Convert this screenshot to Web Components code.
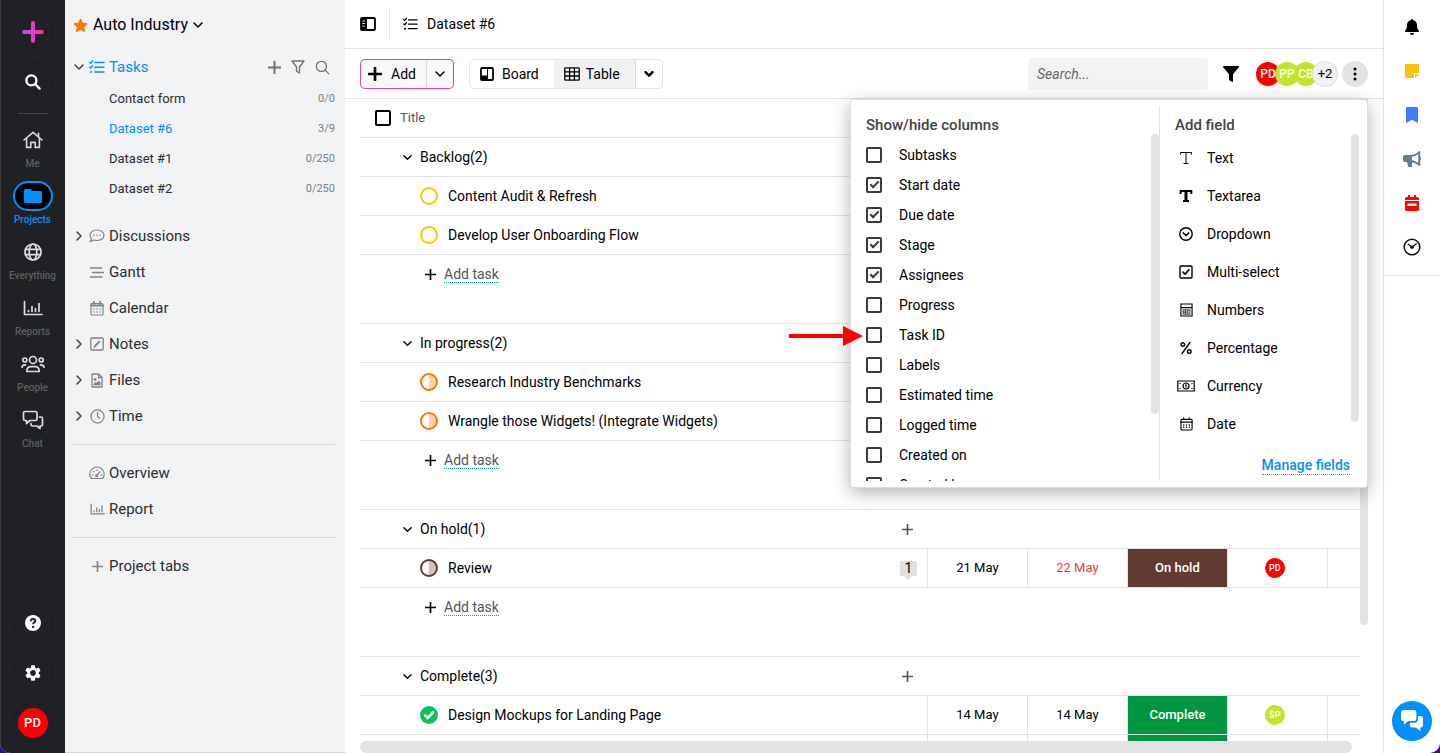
<!DOCTYPE html>
<html lang="en">
<head>
<meta charset="utf-8">
<meta name="viewport" content="width=device-width, initial-scale=1">
<title>Dataset #6 - Auto Industry</title>
<style>
  html, body { height: 100%; }
  body {
    margin: 0;
    background: #3a0a8c;
    color: #000;
    font-family: Roboto, "Liberation Sans", sans-serif;
    font-size: 14px;
    line-height: 20px;
    overflow: hidden;
  }
</style>
</head>
<body>
<project-app></project-app>

<script>
// Icon drawings: [viewBox, markup]
const line = 'fill="none" stroke="currentColor" stroke-linecap="round" stroke-linejoin="round"';
const ICONS = {
  plusGradient: ['0 0 22 22', `<defs><linearGradient id="g" x1="0" x2="1" y1="0" y2="0"><stop offset="0" stop-color="#b44df5"/><stop offset=".5" stop-color="#e83ad0"/><stop offset="1" stop-color="#ff2d9d"/></linearGradient></defs><path d="M9 1.700q0-1.400 2-1.400t2 1.400V9h7.300q1.400 0 1.400 2t-1.400 2H13v7.300q0 1.400-2 1.400t-2-1.400V13H1.700Q.3 13 .3 11t1.400-2H9z" fill="url(#g)"/>`],
  searchBold: ['0 0 16 16', `<g ${line} stroke-width="2.400"><circle cx="6.400" cy="6.400" r="5"/><path d="M10.200 10.200l4.400 4.400"/></g>`],
  search: ['0 0 16 16', `<g ${line} stroke-width="1.300"><circle cx="6.800" cy="6.800" r="5.400"/><path d="M10.800 10.800l4 4"/></g>`],
  home: ['0 0 20 18', `<g ${line} stroke-width="1.600"><path d="M1 9l9-7.600L19 9"/><path d="M3.600 7.400v9h4.200v-5h4.400v5h4.200v-9"/><path d="M15.500 2.200v3.300"/></g>`],
  folder: ['0 0 18 14', `<path fill="currentColor" d="M1.500 0h5l2 2h8A1.500 1.500 0 0 1 18 3.500v9a1.500 1.500 0 0 1-1.500 1.500h-15A1.500 1.500 0 0 1 0 12.500v-11A1.500 1.500 0 0 1 1.500 0z"/>`],
  globe: ['0 0 18 18', `<g ${line} stroke-width="1.700"><circle cx="9" cy="9" r="8"/><ellipse cx="9" cy="9" rx="3.800" ry="8"/><path d="M1.600 6.300h14.800M1.600 11.700h14.800"/></g>`],
  chart: ['0 0 20 16', `<g ${line} stroke-width="1.700"><path d="M1.500 1.500v13h17.500"/><path d="M5.500 11.500v-1M9 11.500v-5M12.500 11.500v-3M16 11.500v-8"/></g>`],
  people: ['0 0 24 18', `<g ${line} stroke-width="1.700"><circle cx="12" cy="5" r="3.500"/><circle cx="3.800" cy="5" r="2"/><circle cx="20.200" cy="5" r="2"/><path d="M5.800 16.500c0-3.600 2-4.800 4-4.800h4.400c2 0 4 1.200 4 4.800z"/><path d="M1 12.300c0-2 1.200-2.500 3.600-2.500M23 12.300c0-2-1.200-2.500-3.600-2.500"/></g>`],
  chat: ['0 0 22 20', `<g ${line} stroke-width="1.700"><path d="M3 1.500h10.500a1.500 1.500 0 0 1 1.500 1.500v6a1.500 1.500 0 0 1-1.500 1.500H8l-3.500 3v-3H3A1.500 1.500 0 0 1 1.500 9V3A1.500 1.500 0 0 1 3 1.500z"/><path d="M17.500 7H19a1.500 1.500 0 0 1 1.500 1.500v6A1.500 1.500 0 0 1 19 16h-1v2.500L15 16h-4.500A1.500 1.500 0 0 1 9 14.500v-1"/></g>`],
  help: ['0 0 16 16', `<circle cx="8" cy="8" r="8" fill="currentColor"/><path d="M5.800 6.200c.1-1.500 1-2.200 2.300-2.200s2.200.8 2.200 1.900c0 1.600-2.200 1.600-2.200 3.300" fill="none" stroke="#202124" stroke-width="1.900"/><circle cx="8.100" cy="11.900" r="1.200" fill="#202124"/>`],
  gear: ['2.400 2 19.200 20', `<path fill="currentColor" d="M19.140 12.940c.04-.3.06-.61.06-.94 0-.32-.02-.64-.07-.94l2.030-1.580c.18-.14.23-.41.12-.61l-1.920-3.320c-.12-.22-.37-.29-.59-.22l-2.390.96c-.5-.38-1.030-.7-1.620-.94l-.36-2.540c-.04-.24-.24-.41-.48-.41h-3.840c-.24 0-.43.17-.47.41l-.36 2.540c-.59.24-1.130.57-1.620.94l-2.390-.96c-.22-.08-.47 0-.59.22L2.740 8.870c-.12.21-.08.47.12.61l2.030 1.580c-.05.3-.09.63-.09.94s.02.64.07.94l-2.030 1.580c-.18.14-.23.41-.12.61l1.920 3.320c.12.22.37.29.59.22l2.390-.96c.5.38 1.030.7 1.620.94l.36 2.540c.05.24.24.41.48.41h3.840c.24 0 .44-.17.47-.41l.36-2.540c.59-.24 1.130-.56 1.620-.94l2.390.96c.22.08.47 0 .59-.22l1.920-3.320c.12-.22.07-.47-.12-.61l-2.010-1.580zM12 15.600c-1.980 0-3.600-1.620-3.600-3.600s1.620-3.600 3.600-3.600 3.600 1.620 3.600 3.600-1.620 3.600-3.600 3.600z"/>`],
  star: ['0 0 14 14', `<path fill="currentColor" stroke="currentColor" stroke-linejoin="round" d="M7 1l1.800 3.900 4.200.5-3.100 2.900.8 4.200L7 10.400l-3.700 2.100.8-4.200L1 5.400l4.200-.5z"/>`],
  down: ['0 0 10 10', `<path ${line} stroke-width="1.500" d="M1 3l4 4 4-4"/>`],
  downBold: ['0 0 10 10', `<path ${line} stroke-width="2.400" d="M1.500 3.200L5 6.700l3.500-3.500"/>`],
  right: ['0 0 10 10', `<path ${line} stroke-width="1.500" d="M3 1l4 4-4 4"/>`],
  tasks: ['0 0 16 14', `<g ${line} stroke-width="1.400"><path d="M5.800 2.500H15M5.800 7.200H15M5.800 12H15"/><path d="M.8 2.200l1 1L3.600 1M.8 6.900l1 1 1.800-2.200"/><path d="M2 12h.2" stroke-width="2"/></g>`],
  plus: ['0 0 12 12', `<path d="M6 0v12M0 6h12" fill="none" stroke="currentColor" stroke-width="1.800"/>`],
  plusBold: ['0 0 14 14', `<path d="M7 1v12M1 7h12" ${line} stroke-width="2.700"/>`],
  funnel: ['0 0 14 14', `<path ${line} stroke-width="1.300" d="M1 1h12L8.500 7v6l-3-1.700V7z"/>`],
  funnelSolid: ['0 0 16 16', `<path fill="currentColor" d="M.6 0h14.800q.9.500.4 1.300L10 8.200v7q-.3.900-1 .7l-2.500-1.700Q6 14 6 13.400V8.200L.2 1.300Q-.3.500.6 0z"/>`],
  bubble: ['0 0 16 14', `<g ${line} stroke-width="1.200"><path d="M8 1c3.900 0 7 2.300 7 5.200s-3.100 5.300-7 5.300c-1 0-2-.2-2.900-.5L1 12.800l1.600-3C1.600 8.800 1 7.600 1 6.200 1 3.300 4.100 1 8 1z"/><path stroke-width="1.500" d="M4.900 6.300h.1M8 6.300h.1M11.100 6.300h.1"/></g>`],
  gantt: ['0 0 14 13', `<path fill="none" stroke="currentColor" stroke-width="1.500" d="M0 2h12M2 6.500h12M0 11h12.500"/>`],
  calendar: ['0 0 14 15', `<g ${line} stroke-width="1.200"><rect x="1" y="2.500" width="12" height="11.500" rx="1"/><path d="M1 4.500h12M4 .8v2M10 .8v2" stroke-width="1.800"/><path stroke-width="1.500" d="M4 8h.1M7 8h.1M10 8h.1M4 11h.1M7 11h.1M10 11h.1"/></g>`],
  date: ['0 0 14 15', `<g ${line} stroke-width="1.200"><rect x="1" y="2.500" width="12" height="11.500" rx="1"/><path d="M1 5.500h12M4 .8v1.700M10 .8v1.700"/><path stroke-width="1.500" d="M4 8.500h.1M7 8.500h.1M10 8.500h.1M4 11h.1M7 11h.1M10 11h.1"/></g>`],
  note: ['0 0 14 14', `<g ${line} stroke-width="1.300"><rect x=".8" y="1" width="12.400" height="12" rx="1"/><path stroke-width="1.900" d="M5 9l4.300-4.400"/><path stroke-width="1" d="M3.800 10.300l1-.3"/></g>`],
  file: ['0 0 12 15', `<g ${line} stroke-width="1.300"><path d="M1 1h6.500L11 4.500V14H1zM7.500 1v3.500H11"/><circle cx="4" cy="6.500" r=".8" fill="currentColor"/><path fill="currentColor" d="M3 11.500l1.500-1.800 1.200 1 2-2.200 1.300 1.500v1.500z"/></g>`],
  clock: ['0 0 16 16', `<g ${line} stroke-width="1.300"><circle cx="8" cy="8" r="7"/><path d="M8 3.800V8l2.200 1.900"/></g>`],
  gauge: ['0 0 16 14', `<g ${line} stroke-width="1.200"><path d="M2.500 12.500C1.500 11.400.8 10 .8 8.200a7.200 7.200 0 0 1 14.400 0c0 1.800-.7 3.200-1.700 4.300z"/><path d="M8 9.200l3-3.400"/><circle cx="7.700" cy="9.700" r="1"/><path stroke-width="1.500" d="M3.500 9h.1M4.700 5.800h.1M8 4.200h.1M12.500 9h.1"/></g>`],
  panel: ['0 0 16 14', `<rect x="1" y="1" width="14" height="12" rx="1" fill="none" stroke="currentColor" stroke-width="1.800"/><path fill="currentColor" d="M1 1h6v12H1z"/><path d="M2.500 4h2.200M2.500 6.500h2.200M2.500 9h2.200" stroke="#fff"/>`],
  board: ['0 0 14 14', `<rect x="1" y="1" width="12" height="12" rx="1" fill="none" stroke="currentColor" stroke-width="1.800"/><path fill="currentColor" d="M1 8.500h6V1h1v12H1z"/>`],
  grid: ['0 0 16 14', `<path ${line} stroke-width="1.300" d="M1.500.8h13q.7 0 .7.700v11q0 .7-.7.7h-13q-.7 0-.7-.7v-11q0-.7.7-.7zM.8 4.800h14.400M.8 9h14.400M5.600.8v12.400M10.400.8v12.400"/>`],
  dots: ['0 0 4 14', `<g fill="currentColor"><circle cx="2" cy="2" r="1.500"/><circle cx="2" cy="7" r="1.500"/><circle cx="2" cy="12" r="1.500"/></g>`],
  bell: ['0 0 14 16', `<path fill="currentColor" d="M7 0a1 1 0 0 1 1 1c2.500.5 4 2.400 4 5 0 3 .5 4.300 1.800 5.600.4.500.2 1.400-.6 1.400H.8c-.8 0-1-.9-.6-1.400C1.500 10.300 2 9 2 6c0-2.600 1.500-4.500 4-5a1 1 0 0 1 1-1zM5 14h4a2 2 0 0 1-4 0z"/>`],
  sticky: ['0 0 14 14', `<path fill="currentColor" d="M1 0h12a1 1 0 0 1 1 1v8H9v5H1a1 1 0 0 1-1-1V1a1 1 0 0 1 1-1zM10 10h4l-4 4z"/>`],
  bookmark: ['0 0 12 16', `<path fill="currentColor" d="M1 0h10a1 1 0 0 1 1 1v15l-6-3.200L0 16V1a1 1 0 0 1 1-1z"/>`],
  horn: ['0 0 18 16', `<path fill="currentColor" fill-rule="evenodd" d="M16.800 0q.4 0 .4.500v5.800a1.200 1.200 0 0 1 0 2.400v5.800q-.5.900-1.200.3-3-3-7-3.600v4.300q0 .5-.5.500H6q-.6 0-.8-.600L4 11H2q-2 0-2-2V6q0-2 2-2h5c4 0 6.500-1.300 9-3.700q.4-.3.800-.300zM15.200 3C13 4.800 11 5.600 9 5.900v3.300c2 .3 4 1 6.200 2.900z"/>`],
  event: ['0 0 14 16', `<path fill="currentColor" fill-rule="evenodd" d="M3 0h2v2h4V0h2v2h1.500A1.500 1.500 0 0 1 14 3.500V5H0V3.500A1.500 1.500 0 0 1 1.500 2H3zM0 6h14v8.500a1.500 1.500 0 0 1-1.500 1.500h-11A1.500 1.500 0 0 1 0 14.500zM2.500 8.500v2.500h9V8.500z"/>`],
  timer: ['0 0 18 18', `<circle cx="9" cy="9" r="7.800" ${line} stroke-width="1.500"/><path ${line} stroke-width="1.300" d="M5.200 6.300L9 9.300l4.300-3.500"/><circle cx="9" cy="9.200" r="1.700" fill="currentColor"/>`],
  thinT: ['0 0 14 14', `<path fill="none" stroke="currentColor" d="M1.500 3.500v-2h11v2M7 1.500v11M4.500 12.500h5"/>`],
  boldT: ['0 0 14 14', `<path fill="none" stroke="currentColor" stroke-width="2" d="M1.700 5V2h10.600v3M4 12h6"/><path fill="none" stroke="currentColor" stroke-width="3" d="M7 2v10"/>`],
  circleDown: ['0 0 14 14', `<g ${line}><circle cx="7" cy="7" r="6.200" stroke-width="1.400"/><path stroke-width="1.700" d="M4.300 6L7 8.500 9.700 6"/></g>`],
  check: ['0 0 14 14', `<g ${line} stroke-width="1.400"><rect x="1" y="1" width="12" height="12" rx="1"/><path stroke-width="1.700" d="M4 7.200l2 2 4-4.400"/></g>`],
  calc: ['0 0 14 15', `<path fill="none" stroke="currentColor" stroke-width="1.200" d="M1 1h12v13H1zM1 5h12"/><path fill="none" stroke="currentColor" stroke-width=".8" d="M3.300 7.300h7.400v4.700H3.300zM3.300 9.700h5.200M5.800 7.300V12M8.500 7.300V12"/>`],
  percent: ['0 0 12 14', `<g ${line} stroke-width="1.400"><path d="M10 1.500L2 12.500"/><circle cx="2.800" cy="3.500" r="1.800"/><circle cx="9.300" cy="10.600" r="1.800"/></g>`],
  money: ['0 0 18 12', `<g fill="none" stroke="currentColor" stroke-width="1.200"><path d="M.8 1h16.400v10H.8z"/><circle cx="9" cy="6" r="3"/><path d="M8.200 4.800H9v2.700M3 3v1M3 8v1M15 3v1M15 8v1"/></g>`],
  chatSolid: ['0 0 22 20', `<g fill="currentColor"><path d="M3 0h10q2 0 2 2v6q0 2-2 2H7.500L3.500 13.500V10H3Q1 10 1 8V2q0-2 2-2z"/><path d="M16.500 5.500H19q2 0 2 2v6.500q0 2-2 2h-.300v3.500L14.500 16H11q-2 0-2-2v-2.500h4.500q3 0 3-3z"/></g>`],
  done: ['0 0 18 18', `<circle cx="9" cy="9" r="9" fill="#0bc15c"/><path d="M5 9.400l2.700 2.600L13 6.500" fill="none" stroke="#fff" stroke-width="2.600" stroke-linecap="round"/>`],
  arrow: ['0 0 74 20', `<path fill="#f00" d="M0 8h54V0l20 10-20 10v-8H0z"/>`]
};

function icon(name, width, height) {
  return `<ui-icon name="${name}" width="${width}" height="${height || width}"></ui-icon>`;
}

// Shared base: puts the template of the class in an open shadow root
class BaseElement extends HTMLElement {
  connectedCallback() {
    if (this.shadowRoot) return;
    this.attachShadow({ mode: "open" });
    this.shadowRoot.innerHTML = `
      <style>
        *, *::before, *::after { box-sizing: border-box; }
        button { font: inherit; color: inherit; background: none; border: 0; padding: 0; margin: 0; }
        a { color: inherit; text-decoration: none; }
        ul { list-style: none; margin: 0; padding: 0; }
        hr { border: 0; margin: 0; }
      </style>` + this.render();
  }
}

class UiIcon extends BaseElement {
  render() {
    const [box, markup] = ICONS[this.getAttribute("name")];
    return `
      <style>
        :host { display: inline-flex; flex: none; }
        svg { display: block; }
      </style>
      <svg viewBox="${box}" width="${this.getAttribute("width")}" height="${this.getAttribute("height")}" aria-hidden="true">${markup}</svg>`;
  }
}

class UserAvatar extends BaseElement {
  render() {
    return `
      <style>
        :host {
          display: inline-flex; align-items: center; justify-content: center; flex: none;
          width: var(--avatar, 24px); height: var(--avatar, 24px);
          border-radius: 50%; background: var(--tone, #f00);
          color: #fff; font-weight: 500; overflow: hidden;
        }
      </style>
      <slot></slot>`;
  }
}

class RailItem extends BaseElement {
  render() {
    const size = this.getAttribute("size").split("x");
    return `
      <style>
        :host { display: block; color: #5d5f63; font-size: 10px; font-weight: 500; line-height: 18px; }
        a { display: flex; flex-direction: column; align-items: center; }
        span { display: flex; align-items: center; justify-content: center; width: 40px; height: 30px; border-radius: 15px; color: #dcdcdc; }
        :host([active]) { color: #0090ff; }
        :host([active]) span { background: #000; border: 2px solid #0090ff; color: #0090ff; }
      </style>
      <a href="#"><span>${icon(this.getAttribute("icon"), size[0], size[1])}</span><slot></slot></a>`;
  }
}

class AppRail extends BaseElement {
  render() {
    return `
      <style>
        :host { display: flex; flex-direction: column; align-items: center; flex: none; width: 65px; padding-right: 1px; background: #202124; border-left: 1px solid #3d3e42; box-sizing: border-box; color: #fff; }
        .round { display: flex; align-items: center; justify-content: center; width: 40px; height: 40px; border: 1px solid #1b1c1f; border-radius: 50%; }
        .top { display: grid; gap: 10px; padding-top: 12px; }
        hr { width: 30px; height: 1px; margin: 11px 0; background: #46474b; }
        nav { display: grid; gap: 8px; }
        .bottom { display: grid; gap: 10px; margin-top: auto; padding-bottom: 10px; }
        user-avatar { --avatar: 30px; font-size: 13px; }
      </style>
      <div class="top">
        <button class="round" aria-label="Create">${icon("plusGradient", 22)}</button>
        <button class="round" aria-label="Search">${icon("searchBold", 16)}</button>
      </div>
      <hr>
      <nav>
        <rail-item icon="home" size="20x18">Me</rail-item>
        <rail-item icon="folder" size="18x14" active>Projects</rail-item>
        <rail-item icon="globe" size="18x18">Everything</rail-item>
        <rail-item icon="chart" size="20x16">Reports</rail-item>
        <rail-item icon="people" size="24x18">People</rail-item>
        <rail-item icon="chat" size="22x20">Chat</rail-item>
      </nav>
      <div class="bottom">
        <button class="round" aria-label="Help">${icon("help", 16)}</button>
        <button class="round" aria-label="Settings">${icon("gear", 16)}</button>
        <button class="round" aria-label="Profile"><user-avatar>PD</user-avatar></button>
      </div>`;
  }
}

class SideLink extends BaseElement {
  render() {
    const size = this.getAttribute("size").split("x");
    return `
      <style>
        :host { display: flex; align-items: center; height: 36px; color: #2b2d30; font-size: 15px; }
        .fold { display: flex; justify-content: center; width: 12px; margin-right: 4px; color: #444; }
        a { display: flex; align-items: center; gap: 4px; }
        .pic { display: flex; justify-content: center; width: 16px; color: #808387; }
        :host([active]) a, :host([active]) .pic { color: #0090ff; }
        ::slotted(*) { margin-left: auto; }
      </style>
      <span class="fold">${this.hasAttribute("fold") ? icon(this.getAttribute("fold"), 10) : ""}</span>
      <a href="#"><span class="pic">${icon(this.getAttribute("icon"), size[0], size[1])}</span>${this.getAttribute("label")}</a>
      <slot></slot>`;
  }
}

class ProjectSidebar extends BaseElement {
  render() {
    const lists = [["Contact form", "0/0"], ["Dataset #6", "3/9"], ["Dataset #1", "0/250"], ["Dataset #2", "0/250"]];
    return `
      <style>
        :host { display: block; flex: none; width: 280px; padding: 9px 10px 0 8px; background: #f1f3f5; border-bottom: 1px solid #d3d5d8; box-sizing: border-box; }
        .project { display: flex; align-items: center; gap: 5px; height: 32px; font-size: 16px; }
        .project ui-icon:first-child { color: #ff7500; }
        .tasks { margin-top: 8px; }
        .tools { display: flex; align-items: center; gap: 10px; margin-right: 5px; color: #6d7074; }
        li a { display: flex; justify-content: space-between; align-items: center; height: 30px; padding-left: 36px; font-size: 13px; color: #2b2d30; }
        li small { font-size: 11px; color: #7c7f83; }
        li.on a { color: #0090ff; }
        ul { margin: -1px 0 14px; }
        hr { height: 1px; background: #d3d5d8; margin: 10px 0; }
      </style>
      <button class="project">${icon("star", 15)}Auto Industry${icon("down", 10)}</button>
      <side-link class="tasks" fold="down" icon="tasks" size="16x14" label="Tasks" active>
        <div class="tools">${icon("plus", 13)}${icon("funnel", 14)}${icon("search", 15)}</div>
      </side-link>
      <ul>
        ${lists.map(([name, count]) => `<li class="${name == "Dataset #6" ? "on" : ""}"><a href="#">${name}<small>${count}</small></a></li>`).join("")}
      </ul>
      <side-link fold="right" icon="bubble" size="16x14" label="Discussions"></side-link>
      <side-link icon="gantt" size="14x13" label="Gantt"></side-link>
      <side-link icon="calendar" size="14x15" label="Calendar"></side-link>
      <side-link fold="right" icon="note" size="14x14" label="Notes"></side-link>
      <side-link fold="right" icon="file" size="12x15" label="Files"></side-link>
      <side-link fold="right" icon="clock" size="15x15" label="Time"></side-link>
      <hr>
      <side-link icon="gauge" size="16x14" label="Overview"></side-link>
      <side-link icon="chart" size="15x12" label="Report"></side-link>
      <hr>
      <side-link icon="plus" size="11x11" label="Project tabs"></side-link>`;
  }
}

class ViewHeader extends BaseElement {
  render() {
    return `
      <style>
        :host { display: flex; align-items: center; flex: none; height: 49px; padding: 0 15px; border-bottom: 1px solid #e2e2e2; box-sizing: border-box; }
        button { display: flex; }
        .title { display: flex; align-items: center; gap: 9px; height: 30px; margin-left: 13px; padding-left: 13px; border-left: 1px solid #e2e2e2; }
        h1 { margin: 0; font: inherit; }
      </style>
      <button aria-label="Toggle sidebar">${icon("panel", 16, 14)}</button>
      <div class="title">${icon("tasks", 15, 14)}<h1><slot></slot></h1></div>`;
  }
}

class ViewToolbar extends BaseElement {
  render() {
    return `
      <style>
        :host { position: relative; z-index: 2; display: flex; align-items: center; flex: none; height: 50px; padding: 0 15px; border-bottom: 1px solid #e2e2e2; box-sizing: border-box; }
        .add, .views { display: flex; height: 30px; border: 1px solid #e2e2e2; border-radius: 5px; overflow: hidden; }
        .add { border-color: transparent; background: linear-gradient(#f6f8fa, #f6f8fa) padding-box, linear-gradient(90deg, #b44df5, #ff2d9d) border-box; }
        .views { margin: 0 auto 0 15px; }
        button { display: flex; align-items: center; justify-content: center; }
        .add button:first-child { gap: 9px; padding: 0 10px 0 7px; }
        .arrow { width: 27px; border-left: 1px solid #dcdcdc; }
        .views button { gap: 8px; padding: 0 15px 0 10px; }
        .views button:nth-child(2) { gap: 6px; background: #f1f2f4; }
        .views .arrow { padding: 0; }
        input { width: 180px; height: 32px; padding: 0 9px; border: 0; border-radius: 4px; background: #f3f3f3; font: italic 14px Roboto, sans-serif; }
        input::placeholder { color: #666; opacity: 1; }
        .filter { margin: 0 17px 0 15px; }
        .team { display: flex; font-size: 12px; }
        .team user-avatar + user-avatar { margin-left: -5px; }
        .lime { --tone: #c3e42c; }
        .more { --tone: #f1f2f4; color: #000; box-shadow: 0 0 0 1px #ddd; font-size: 13px; font-weight: 400; }
        .kebab { width: 26px; height: 26px; margin-left: 5px; border-radius: 50%; background: #e3e3e3; }
        column-menu { position: absolute; top: 50px; right: 15px; }
      </style>
      <div class="add">
        <button>${icon("plusBold", 14)}Add</button>
        <button class="arrow" aria-label="More add options">${icon("down", 10)}</button>
      </div>
      <div class="views">
        <button>${icon("board", 14)}Board</button>
        <button>${icon("grid", 16, 14)}Table</button>
        <button class="arrow" aria-label="More views">${icon("downBold", 10)}</button>
      </div>
      <input type="search" placeholder="Search..." aria-label="Search">
      <button class="filter" aria-label="Filter">${icon("funnelSolid", 16)}</button>
      <div class="team">
        <user-avatar>PD</user-avatar><user-avatar class="lime">PP</user-avatar><user-avatar class="lime">CB</user-avatar><user-avatar class="more">+2</user-avatar>
      </div>
      <button class="kebab" aria-label="More options">${icon("dots", 4, 14)}</button>
      <column-menu></column-menu>`;
  }
}

class ColumnMenu extends BaseElement {
  render() {
    const columns = ["Subtasks", "Start date", "Due date", "Stage", "Assignees", "Progress", "Task ID", "Labels", "Estimated time", "Logged time", "Created on", "Created by"];
    const shown = ["Start date", "Due date", "Stage", "Assignees"];
    const fields = [["thinT", "Text", 14, 14], ["boldT", "Textarea", 14, 14], ["circleDown", "Dropdown", 14, 14], ["check", "Multi-select", 14, 14], ["calc", "Numbers", 13, 14], ["percent", "Percentage", 12, 14], ["money", "Currency", 18, 12], ["date", "Date", 13, 14]];
    return `
      <style>
        :host { display: flex; width: 518px; height: 389px; padding: 6px 0; background: #fff; border: 1px solid #dedede; border-radius: 4px; box-shadow: 0 5px 18px rgba(0, 0, 0, .3); box-sizing: border-box; }
        section { display: flex; flex-direction: column; flex: 1; min-width: 0; }
        .columns { flex: none; width: 309px; border-right: 1px solid #e2e2e2; }
        h2 { margin: 10px 0 0; padding-left: 15px; font-size: 15px; line-height: 18px; font-weight: 500; color: #444; }
        .scroll { display: flex; justify-content: space-between; flex: 1; min-height: 0; overflow: hidden; }
        .thumb { width: 8px; border-radius: 4px; background: #e3e3e3; height: 280px; }
        .columns ul { padding: 6px 0 0 15px; }
        .columns label { display: flex; align-items: center; gap: 16px; height: 30px; }
        input { appearance: none; display: flex; align-items: center; justify-content: center; width: 16px; height: 16px; margin: 0 1px 0 0; border: 2px solid #3a3a3a; border-radius: 2px; }
        input:checked::before { content: ""; width: 9px; height: 5px; margin-top: -3px; border: solid #3a3a3a; border-width: 0 0 2px 2px; transform: rotate(-45deg); }
        .fields ul { padding: 5px 0 0 15px; }
        .fields .scroll { flex: none; padding-right: 8px; }
        .fields .thumb { height: 288px; }
        .fields button { display: flex; align-items: center; gap: 10px; height: 38px; }
        .pic { display: flex; justify-content: center; width: 22px; }
        .manage { margin: 14px 17px 0 auto; line-height: 17px; font-weight: 500; color: #0090ff; border-bottom: 1px dotted #888; }
        .pointer { position: absolute; right: 504px; top: 226px; }
      </style>
      <section class="columns">
        <h2>Show/hide columns</h2>
        <div class="scroll">
          <ul>
            ${columns.map(name => `<li><label><input type="checkbox"${shown.includes(name) ? " checked" : ""}>${name}</label></li>`).join("")}
          </ul>
          <div class="thumb"></div>
        </div>
      </section>
      <section class="fields">
        <h2>Add field</h2>
        <div class="scroll">
          <ul>
            ${fields.map(([pic, name, w, h]) => `<li><button><span class="pic">${icon(pic, w, h)}</span>${name}</button></li>`).join("")}
          </ul>
          <div class="thumb"></div>
        </div>
        <a class="manage" href="#">Manage fields</a>
      </section>
      <div class="pointer">${icon("arrow", 74, 20)}</div>`;
  }
}

// Progress ring shown before the title of a task
class StageRing extends BaseElement {
  render() {
    return `
      <style>
        :host { display: block; flex: none; width: 18px; height: 18px; border: 2px solid var(--ring); border-radius: 50%; box-sizing: border-box; }
        :host([half]) { background: linear-gradient(90deg, #fff 50%, var(--fill) 50%); }
      </style>`;
  }
}

class TaskTable extends BaseElement {
  ring(stage) {
    if (stage == "Complete") return icon("done", 18);
    if (stage == "Backlog") return `<stage-ring style="--ring:#ffc400"></stage-ring>`;
    if (stage == "In progress") return `<stage-ring half style="--ring:#ff7500;--fill:#ffd3b0"></stage-ring>`;
    return `<stage-ring half style="--ring:#613b32;--fill:#cfc4c1"></stage-ring>`;
  }

  row(stage, task) {
    // Backlog and In progress tasks carry a title only
    if (!task.start && stage != "Complete") {
      return `<tr><td><div class="task">${this.ring(stage)}${task.title}</div></td><td></td><td></td><td></td><td></td><td></td></tr>`;
    }
    return `
      <tr>
        <td><div class="task">${task.title ? this.ring(stage) : ""}${task.title}${task.comments ? `<span class="comments">${task.comments}</span>` : ""}</div></td>
        <td class="date">${task.start}</td>
        <td class="date${task.late ? " late" : ""}">${task.due}</td>
        <td class="stage ${stage == "Complete" ? "complete" : "hold"}">${task.title ? stage : ""}</td>
        <td class="who">${task.who ? `<user-avatar style="--tone:${task.tone}">${task.who}</user-avatar>` : ""}</td>
        <td></td>
      </tr>`;
  }

  group(stage, count, tasks, last) {
    return `
      <tbody>
        <tr class="group">
          <th scope="rowgroup"><div>${icon("down", 9)}<span>${stage}(${count})</span><button aria-label="Add to ${stage}">${icon("plus", 11)}</button></div></th>
          <td colspan="5"></td>
        </tr>
        ${tasks.map(task => this.row(stage, task)).join("")}
        ${last ? "" : `<tr class="new"><td colspan="6"><button>${icon("plus", 11)}<span>Add task</span></button></td></tr>`}
      </tbody>`;
  }

  render() {
    return `
      <style>
        :host { display: flex; flex-direction: column; flex: 1; min-height: 0; padding: 0 15px; }
        .body { display: flex; flex: 1; min-height: 0; }
        .sheet { flex: 1; min-width: 0; overflow: hidden; }
        .vbar { width: 8px; height: 82%; border-radius: 0 0 4px 4px; background: #e3e3e3; }
        .hbar { flex: none; height: 12px; margin-right: 16px; border-radius: 6px; background: #e3e3e3; }
        table { width: 100%; table-layout: fixed; border-collapse: separate; border-spacing: 0; }
        .day { width: 100px; }
        .rest { width: 32px; }
        th, td { height: 39px; padding: 0; border-bottom: 1px solid #e2e2e2; font-weight: 400; text-align: left; }
        td { border-right: 1px solid #e2e2e2; }
        td:last-child { border-right: 0; }
        thead label { display: flex; align-items: center; gap: 9px; padding-left: 15px; font-size: 13px; color: #555; }
        input { appearance: none; width: 16px; height: 16px; margin: 0; border: 2px solid #000; border-radius: 2px; }
        .group div { display: flex; align-items: center; gap: 8px; padding: 0 15px 0 43px; }
        .group button { margin-left: auto; display: flex; color: #555; }
        .task { display: flex; align-items: center; gap: 10px; padding: 0 10px 0 60px; }
        .comments { position: relative; margin-left: auto; width: 17px; height: 15px; line-height: 15px; border-radius: 2px; background: #e0e0e0; text-align: center; }
        .comments::after { content: ""; position: absolute; left: 4px; top: 15px; border: 4px solid transparent; border-top-color: #e0e0e0; border-bottom: 0; }
        .date, .stage, .who { text-align: center; font-size: 13px; }
        .late { color: #f23a3a; }
        .stage { color: #fff; font-weight: 500; }
        .hold { background: #613b32; }
        .complete { background: #009641; }
        .who user-avatar { --avatar: 20px; font-size: 9px; margin-right: 5px; vertical-align: middle; }
        .new td { height: 69px; vertical-align: top; }
        .new button { display: flex; align-items: center; gap: 8px; height: 39px; padding-left: 65px; }
        .new span { line-height: 16px; color: #555; border-bottom: 1px dotted #0090ff; }
      </style>
      <div class="body">
        <div class="sheet">
          <table>
            <colgroup><col><col class="day"><col class="day"><col class="day"><col class="day"><col class="rest"></colgroup>
            <thead><tr><th colspan="6"><label><input type="checkbox">Title</label></th></tr></thead>
            ${this.group("Backlog", 2, [{ title: "Content Audit &amp; Refresh" }, { title: "Develop User Onboarding Flow" }])}
            ${this.group("In progress", 2, [{ title: "Research Industry Benchmarks" }, { title: "Wrangle those Widgets! (Integrate Widgets)" }])}
            ${this.group("On hold", 1, [{ title: "Review", comments: 1, start: "21 May", due: "22 May", late: true, who: "PD", tone: "#f00" }])}
            ${this.group("Complete", 3, [{ title: "Design Mockups for Landing Page", start: "14 May", due: "14 May", who: "SP", tone: "#c3e42c" }, { title: "", start: "", due: "" }], true)}
          </table>
        </div>
        <div class="vbar"></div>
      </div>
      <div class="hbar"></div>`;
  }
}

class QuickRail extends BaseElement {
  render() {
    const items = [["bell", 14, 16, "#000", "Notifications"], ["sticky", 14, 14, "#ffc107", "Stickies"], ["bookmark", 12, 16, "#407bff", "Bookmarks"], ["horn", 18, 16, "#5c8293", "Announcements"], ["event", 14, 16, "#f00", "Events"], ["timer", 18, 18, "#111", "Timer"]];
    return `
      <style>
        :host { display: flex; flex-direction: column; justify-content: space-between; align-items: flex-end; flex: none; width: 57px; border-left: 1px solid #e2e2e2; box-sizing: border-box; }
        nav { display: grid; align-self: stretch; padding: 5px 0 6px; border-bottom: 1px solid #e2e2e2; }
        button { display: flex; align-items: center; justify-content: center; height: 44px; }
        .chat { width: 40px; height: 40px; margin: 0 8px 12px 0; border-radius: 50%; background: #0090ff; color: #fff; }
      </style>
      <nav>${items.map(([pic, w, h, tone, name]) => `<button style="color:${tone}" aria-label="${name}">${icon(pic, w, h)}</button>`).join("")}</nav>
      <button class="chat" aria-label="Open chat">${icon("chatSolid", 24, 22)}</button>`;
  }
}

class ProjectApp extends BaseElement {
  render() {
    return `
      <style>
        :host { display: flex; height: 100vh; border-radius: 0 0 10px 10px; background: #fff; overflow: hidden; }
        main { display: flex; flex-direction: column; flex: 1; min-width: 0; }
      </style>
      <app-rail></app-rail>
      <project-sidebar></project-sidebar>
      <main>
        <view-header>Dataset #6</view-header>
        <view-toolbar></view-toolbar>
        <task-table></task-table>
      </main>
      <quick-rail></quick-rail>`;
  }
}

customElements.define("ui-icon", UiIcon);
customElements.define("user-avatar", UserAvatar);
customElements.define("rail-item", RailItem);
customElements.define("app-rail", AppRail);
customElements.define("side-link", SideLink);
customElements.define("project-sidebar", ProjectSidebar);
customElements.define("view-header", ViewHeader);
customElements.define("column-menu", ColumnMenu);
customElements.define("view-toolbar", ViewToolbar);
customElements.define("stage-ring", StageRing);
customElements.define("task-table", TaskTable);
customElements.define("quick-rail", QuickRail);
customElements.define("project-app", ProjectApp);
</script>
</body>
</html>
